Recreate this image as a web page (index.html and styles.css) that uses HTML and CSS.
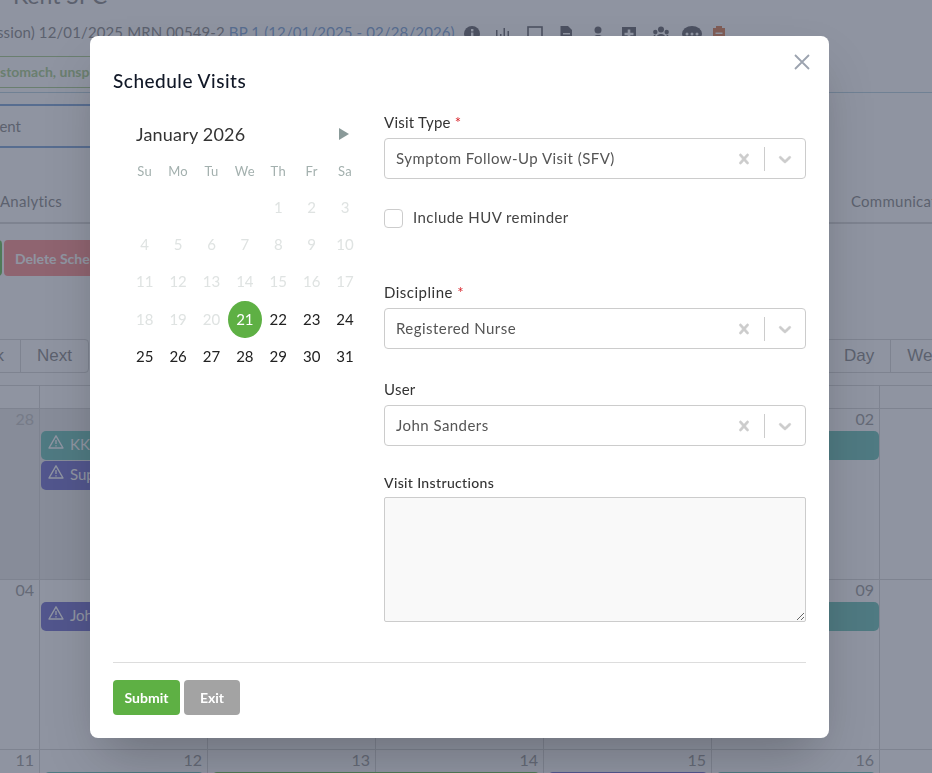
FILE: index.html
```html
<!DOCTYPE html>
<html lang="en">

<head>
  <meta charset="UTF-8">
  <meta name="viewport" content="width=device-width, initial-scale=1.0">
  <title>Schedule Visits</title>
  <link rel="stylesheet" href="styles.css">
</head>

<body>
  <svg class="sprites" width="0" height="0" aria-hidden="true">
    <symbol id="icon-warning" viewBox="0 0 16 16">
      <path d="M8 1.8 15 14H1z" fill="none" stroke="currentColor" stroke-width="1.4" stroke-linejoin="round" />
      <path d="M8 6v4M8 11.3v1.2" stroke="currentColor" stroke-width="1.4" />
    </symbol>
    <symbol id="icon-clear" viewBox="0 0 20 20">
      <path d="M14.348 14.849c-0.469 0.469-1.229 0.469-1.697 0l-2.651-3.030-2.651 3.029c-0.469 0.469-1.229 0.469-1.697 0-0.469-0.469-0.469-1.229 0-1.697l2.758-3.15-2.759-3.152c-0.469-0.469-0.469-1.228 0-1.697s1.228-0.469 1.697 0l2.652 3.031 2.651-3.031c0.469-0.469 1.228-0.469 1.697 0s0.469 1.229 0 1.697l-2.758 3.152 2.758 3.15c0.469 0.469 0.469 1.229 0 1.698z" />
    </symbol>
    <symbol id="icon-chevron" viewBox="0 0 20 20">
      <path d="M4.516 7.548c0.436-0.446 1.043-0.481 1.576 0l3.908 3.747 3.908-3.747c0.533-0.481 1.141-0.446 1.574 0 0.436 0.445 0.408 1.197 0 1.615-0.406 0.418-4.695 4.502-4.695 4.502-0.217 0.223-0.502 0.335-0.787 0.335s-0.57-0.112-0.789-0.335c0 0-4.287-4.084-4.695-4.502s-0.436-1.17 0-1.615z" />
    </symbol>
  </svg>

  <div class="page">
    <h1 class="patient-name">Kent SFC</h1>

    <div class="patient-info">
      <span>(Admission) 12/01/2025 MRN 00549-2</span>
      <span class="patient-info_period">BP 1 (12/01/2025 - 02/28/2026)</span>
      <div class="patient-icons">
        <svg viewBox="0 0 16 16"><circle cx="8" cy="8" r="8" /><rect x="7" y="3" width="2.4" height="2.4" fill="#fff" /><rect x="7" y="6.5" width="2.4" height="7" fill="#fff" /></svg>
        <svg viewBox="0 0 16 16"><path d="M1 4h1.5v12H1zM5 8h1.5v8H5zM8.500 2H10v14H8.500zM12.500 5H14v11h-1.500z" /></svg>
        <svg viewBox="0 0 16 16"><rect x="1" y="1" width="14" height="14" fill="none" stroke="currentColor" stroke-width="1.6" /></svg>
        <svg viewBox="0 0 16 16"><path d="M2.500 0H10l4 4v12H2.500zM5 7v1.500h7V7zM5 10v1.500h7V10z" fill-rule="evenodd" /></svg>
        <svg viewBox="0 0 16 16"><circle cx="8" cy="4" r="3.500" /><path d="M2 16c0-5 2-7 6-7s6 2 6 7z" /></svg>
        <svg viewBox="0 0 16 16"><path d="M1 1h14v14H1zM6.700 3.500v3.200H3.500v2.600h3.200v3.200h2.600V9.300h3.200V6.700H9.300V3.500z" fill-rule="evenodd" /></svg>
        <svg viewBox="0 0 16 16"><circle cx="8" cy="3.500" r="3" /><circle cx="2.300" cy="6" r="2.200" /><circle cx="13.700" cy="6" r="2.200" /><path d="M3 14c0-4 2-6 5-6s5 2 5 6zM0 12c0-2 1-3.500 2.500-3.500L2 12zM16 12c0-2-1-3.500-2.500-3.500L14 12z" /></svg>
        <svg class="patient-icons_chat" viewBox="0 0 20 16"><ellipse cx="10" cy="8" rx="10" ry="8" /><g fill="#fff"><circle cx="5" cy="8" r="1.500" /><circle cx="10" cy="8" r="1.500" /><circle cx="15" cy="8" r="1.500" /></g></svg>
        <svg class="patient-icons_clipboard" viewBox="0 0 16 16"><path d="M5 2V0h6v2h3v14H2V2zM4.500 6.500V8h7V6.500zM4.500 10v1.500h7V10z" fill-rule="evenodd" /></svg>
      </div>
    </div>

    <div class="diagnosis">stomach, unspecified</div>
    <div class="rule"></div>
    <div class="assessment">Assessment</div>

    <nav class="tabs">
      <a>Analytics</a>
      <a>Communication</a>
    </nav>

    <div class="actions">
      <button class="actions_sliver"></button>
      <button class="actions_delete">Delete Schedule</button>
    </div>

    <div class="cal-toolbar">
      <div class="cal-toolbar_group cal-toolbar_group--left">
        <button>Back</button>
        <button>Next</button>
      </div>
      <div class="cal-toolbar_group cal-toolbar_group--right">
        <button>Day</button>
        <button>Week</button>
      </div>
    </div>

    <div class="cal">
      <div class="cal_head">
        <div></div><div></div><div></div><div></div><div></div><div></div><div></div>
      </div>

      <div class="cal_week cal_week--first">
        <div class="cal_bg cal_bg--past"></div>
        <div class="cal_bg cal_bg--past"></div>
        <div class="cal_bg"></div>
        <div class="cal_bg"></div>
        <div class="cal_bg"></div>
        <div class="cal_bg"></div>
        <div class="cal_bg cal_bg--last"></div>
        <span class="cal_date cal_date--c1">28</span>
        <span class="cal_date cal_date--c6">02</span>
        <div class="event event--teal event--full"><svg><use href="#icon-warning" /></svg>KKa</div>
        <div class="event event--purple event--left"><svg><use href="#icon-warning" /></svg>Sup</div>
      </div>

      <div class="cal_week">
        <div class="cal_bg"></div>
        <div class="cal_bg"></div>
        <div class="cal_bg"></div>
        <div class="cal_bg"></div>
        <div class="cal_bg"></div>
        <div class="cal_bg"></div>
        <div class="cal_bg cal_bg--last"></div>
        <span class="cal_date cal_date--c1">04</span>
        <span class="cal_date cal_date--c6">09</span>
        <div class="event event--purple event--left"><svg><use href="#icon-warning" /></svg>Joh</div>
        <div class="event event--teal event--right"></div>
      </div>

      <div class="cal_week">
        <div class="cal_bg"></div>
        <div class="cal_bg"></div>
        <div class="cal_bg"></div>
        <div class="cal_bg"></div>
        <div class="cal_bg"></div>
        <div class="cal_bg"></div>
        <div class="cal_bg cal_bg--last"></div>
        <span class="cal_date cal_date--c1">11</span>
        <span class="cal_date cal_date--c2">12</span>
        <span class="cal_date cal_date--c3">13</span>
        <span class="cal_date cal_date--c4">14</span>
        <span class="cal_date cal_date--c5">15</span>
        <span class="cal_date cal_date--c6">16</span>
        <div class="event event--teal event--day2"></div>
        <div class="event event--green event--day3"></div>
        <div class="event event--purple event--day5"></div>
        <div class="event event--teal event--day6"></div>
      </div>
    </div>
  </div>

  <div class="overlay">
    <div class="modal">
      <button class="modal_close" aria-label="Close">
        <svg viewBox="0 0 16 16" width="16" height="16"><path d="M1 1l14 14M15 1 1 15" /></svg>
      </button>
      <h2 class="modal_title">Schedule Visits</h2>

      <div class="modal_body">
        <div class="picker">
          <div class="picker_head">
            <span>January 2026</span>
            <span class="picker_next"></span>
          </div>
          <div class="picker_grid">
            <span class="picker_dow">Su</span><span class="picker_dow">Mo</span><span class="picker_dow">Tu</span><span class="picker_dow">We</span><span class="picker_dow">Th</span><span class="picker_dow">Fr</span><span class="picker_dow">Sa</span>
            <span></span><span></span><span></span><span></span><span class="off">1</span><span class="off">2</span><span class="off">3</span>
            <span class="off">4</span><span class="off">5</span><span class="off">6</span><span class="off">7</span><span class="off">8</span><span class="off">9</span><span class="off">10</span>
            <span class="off">11</span><span class="off">12</span><span class="off">13</span><span class="off">14</span><span class="off">15</span><span class="off">16</span><span class="off">17</span>
            <span class="off">18</span><span class="off">19</span><span class="off">20</span><span class="selected">21</span><span>22</span><span>23</span><span>24</span>
            <span>25</span><span>26</span><span>27</span><span>28</span><span>29</span><span>30</span><span>31</span>
          </div>
        </div>

        <form class="form">
          <label class="form_label">Visit Type <em>*</em></label>
          <div class="select">
            <span class="select_value">Symptom Follow-Up Visit (SFV)</span>
            <svg class="select_icon"><use href="#icon-clear" /></svg>
            <span class="select_sep"></span>
            <svg class="select_icon"><use href="#icon-chevron" /></svg>
          </div>

          <label class="form_check">
            <input type="checkbox">
            <span>Include HUV reminder</span>
          </label>

          <label class="form_label form_label--discipline">Discipline <em>*</em></label>
          <div class="select">
            <span class="select_value">Registered Nurse</span>
            <svg class="select_icon"><use href="#icon-clear" /></svg>
            <span class="select_sep"></span>
            <svg class="select_icon"><use href="#icon-chevron" /></svg>
          </div>

          <label class="form_label form_label--user">User</label>
          <div class="select">
            <span class="select_value">John Sanders</span>
            <svg class="select_icon"><use href="#icon-clear" /></svg>
            <span class="select_sep"></span>
            <svg class="select_icon"><use href="#icon-chevron" /></svg>
          </div>

          <label class="form_label form_label--notes">Visit Instructions</label>
          <textarea class="form_notes"></textarea>
        </form>
      </div>

      <div class="modal_footer">
        <button class="btn btn--submit">Submit</button>
        <button class="btn btn--exit">Exit</button>
      </div>
    </div>
  </div>
</body>

</html>
```

FILE: styles.css
```css
* {
  box-sizing: border-box;
  padding: 0;
  margin: 0;
}

html,
body {
  height: 773px;
  overflow: hidden;
}

body {
  font-family: Lato, sans-serif;
  font-size: 15px;
  color: #999;
  background-color: #fff;
}

button {
  font-family: inherit;
  border: none;
  background: none;
}

.sprites {
  display: block;
}

/* page behind the dialog */

.page {
  width: 932px;
  height: 773px;
  overflow: hidden;
}

.patient-name {
  height: 26px;
  margin-top: -18px;
  padding-left: 13px;
  font-size: 23px;
  font-weight: 400;
  line-height: 26px;
}

.patient-info {
  display: flex;
  align-items: center;
  gap: 4px;
  height: 16px;
  margin-top: 16px;
  margin-left: -42px;
  letter-spacing: .12px;
  white-space: nowrap;
}

.patient-info_period {
  color: #8fb0dc;
}

.patient-icons {
  display: flex;
  align-items: center;
  gap: 15.5px;
  margin-top: 4px;
  margin-left: 5px;
  color: #7a7a80;
}

.patient-icons svg {
  display: block;
  width: 16px;
  height: 16px;
  fill: currentColor;
}

.patient-icons_chat {
  width: 20px !important;
  margin-left: -2px;
}

.patient-icons_clipboard {
  margin-left: -7px;
  color: #e0916a;
}

.diagnosis {
  width: 400px;
  height: 32px;
  margin-top: 16px;
  margin-left: -12px;
  padding-left: 12px;
  border-top: 1px solid #b5d49a;
  border-bottom: 1px solid #b5d49a;
  font-size: 14px;
  font-weight: 700;
  line-height: 30px;
  color: #b5d49a;
  white-space: nowrap;
}

.rule {
  height: 1px;
  margin-top: 4px;
  background-color: #c0d8e4;
}

.assessment {
  width: 400px;
  height: 44px;
  margin-top: 11px;
  margin-left: -57px;
  border-top: 2px solid #8fb0dc;
  border-bottom: 2px solid #8fb0dc;
  line-height: 40px;
}

.tabs {
  display: flex;
  justify-content: space-between;
  height: 76px;
  padding-top: 42px;
  margin-right: -26px;
  border-bottom: 2px solid #ddd;
  line-height: 22px;
  letter-spacing: .25px;
  white-space: nowrap;
}

.actions {
  display: flex;
  gap: 2px;
  height: 36px;
  margin-top: 16px;
}

.actions button {
  height: 36px;
  border-radius: 4px;
  font-size: 14px;
  font-weight: 700;
}

.actions_sliver {
  width: 12px;
  margin-left: -10px;
  background-color: #7fcb6a;
}

.actions_delete {
  width: 200px;
  padding-left: 11px;
  text-align: left;
  color: #fff;
  background-color: #ff9f9d;
}

.cal-toolbar {
  display: flex;
  height: 34px;
  margin-top: 63px;
}

.cal-toolbar_group {
  display: flex;
}

.cal-toolbar_group--left {
  justify-content: flex-end;
  width: 89px;
  margin-left: 0;
}

.cal-toolbar_group--right {
  margin-left: 738px;
}

.cal-toolbar button {
  height: 34px;
  padding: 0 16px;
  border: 1px solid #ddd;
  font-family: "Liberation Sans", sans-serif;
  font-size: 17px;
  color: #999;
  white-space: nowrap;
}

.cal-toolbar_group--left button:first-child {
  margin-left: -40px;
}

.cal-toolbar_group--left button:last-child {
  margin-left: -1px;
  border-radius: 0 4px 4px 0;
}

.cal-toolbar_group--right button:last-child {
  margin-left: -1px;
}

.cal {
  margin-top: 12px;
  border-top: 1px solid #ddd;
}

.cal_head,
.cal_week {
  display: grid;
  grid-template-columns: 40px repeat(5, 168px) 52px;
}

.cal_head {
  height: 23px;
  border-bottom: 1px solid #ddd;
}

.cal_head div {
  border-right: 1px solid #ddd;
}

.cal_head div:last-child {
  border-right: none;
}

.cal_week {
  grid-template-rows: 22px 30px 30px 1fr;
  height: 170px;
  border-bottom: 1px solid #ddd;
}

.cal_week--first {
  height: 171px;
}

.cal_bg {
  grid-row: 1 / -1;
  border-right: 1px solid #ddd;
}

.cal_bg:nth-child(1) { grid-column: 1; }
.cal_bg:nth-child(2) { grid-column: 2; }
.cal_bg:nth-child(3) { grid-column: 3; }
.cal_bg:nth-child(4) { grid-column: 4; }
.cal_bg:nth-child(5) { grid-column: 5; }
.cal_bg:nth-child(6) { grid-column: 6; }
.cal_bg:nth-child(7) { grid-column: 7; }

.cal_bg--past {
  background-color: #eee;
}

.cal_bg--last {
  border-right: none;
}

.cal_date {
  grid-row: 1;
  z-index: 1;
  padding-right: 6px;
  font-size: 16px;
  line-height: 20px;
  text-align: right;
  color: #aaa;
}

.cal_week--first .cal_date--c1 {
  color: #ccc;
}

.cal_date--c1 { grid-column: 1; }
.cal_date--c2 { grid-column: 2; }
.cal_date--c3 { grid-column: 3; }
.cal_date--c4 { grid-column: 4; }
.cal_date--c5 { grid-column: 5; }
.cal_date--c6 { grid-column: 6; }

.event {
  display: flex;
  align-items: flex-start;
  gap: 6px;
  z-index: 1;
  height: 29px;
  margin: 0 1px;
  padding: 3px 7px;
  border-radius: 5px;
  font-size: 15px;
  line-height: 20px;
  color: #fff;
  overflow: hidden;
}

.event svg {
  flex: none;
  width: 16px;
  height: 16px;
}

.event--teal {
  background-color: #7fcbc0;
}

.event--purple {
  background-color: #8583d6;
}

.event--green {
  background-color: #7fcb6a;
}

.event--full {
  grid-column: 2 / 7;
  grid-row: 2;
}

.event--left {
  grid-column: 2 / 5;
  grid-row: 2;
}

.event--full + .event--left {
  grid-row: 3;
}

.event--right {
  grid-column: 5 / 7;
  grid-row: 2;
}

.event--day2 {
  grid-column: 2;
  grid-row: 2;
  margin: 0 4px;
}

.event--day3 {
  grid-column: 3 / 5;
  grid-row: 2;
  margin: 0 4px;
}

.event--day5 {
  grid-column: 5;
  grid-row: 2;
  margin: 0 4px;
}

.event--day6 {
  grid-column: 6;
  grid-row: 2;
  margin: 0 4px;
}

/* dialog */

.overlay {
  position: fixed;
  inset: 0;
  z-index: 10;
  padding: 36px 0 0 90px;
  background-color: rgba(31, 41, 67, .5);
}

.modal {
  position: relative;
  width: 739px;
  padding: 33px 23px 23px;
  border-radius: 8px;
  color: #333;
  background-color: #fff;
  box-shadow: 0 25px 50px -12px rgba(0, 0, 0, .25);
}

.modal_close {
  position: absolute;
  top: 18px;
  right: 19px;
  width: 16px;
  height: 16px;
}

.modal_close svg {
  display: block;
  fill: none;
  stroke: #9ca3af;
  stroke-width: 1.8;
}

.modal_title {
  height: 24px;
  margin-bottom: 20px;
  font-size: 19px;
  font-weight: 500;
  line-height: 24px;
  letter-spacing: .5px;
  color: #111827;
}

.modal_body {
  display: grid;
  grid-template-columns: 271px 422px;
  padding-bottom: 40px;
  border-bottom: 1px solid #ddd;
}

.picker {
  padding: 1px 0 0 15px;
}

.picker_head {
  display: flex;
  align-items: center;
  justify-content: space-between;
  width: 234px;
  height: 40px;
  padding: 0 13px 0 8px;
  font-size: 18px;
  font-weight: 400;
  letter-spacing: .2px;
  color: #333;
}

.picker_next {
  width: 0;
  height: 0;
  border-top: 6.500px solid transparent;
  border-bottom: 6.500px solid transparent;
  border-left: 10px solid #8a9a99;
}

.picker_grid {
  display: grid;
  grid-template-columns: repeat(7, 33.400px);
  grid-template-rows: 35px;
  grid-auto-rows: 37.300px;
  font-size: 15px;
  color: #222;
}

.picker_grid span {
  display: flex;
  align-items: center;
  justify-content: center;
  padding-bottom: 2px;
}

.picker_grid .picker_dow {
  font-size: 13px;
  letter-spacing: .3px;
  color: #a3b0ae;
}

.picker_grid .off {
  color: #dfe3e2;
}

.picker_grid .selected {
  border-radius: 50%;
  color: #fff;
  background-color: #5eb044;
}

.form_label {
  display: block;
  height: 18px;
  margin-bottom: 7px;
  font-size: 15px;
  line-height: 18px;
  letter-spacing: .25px;
  color: #333;
}

.form_label em {
  font-style: normal;
  color: #d8232a;
}

.form_label--discipline {
  margin-top: 55px;
  letter-spacing: .5px;
}

.form_label--user {
  margin-top: 31px;
}

.form_label--notes {
  margin-top: 28px;
  margin-bottom: 5px;
  font-size: 14px;
  font-weight: 500;
  letter-spacing: .35px;
}

.select {
  display: flex;
  align-items: center;
  height: 41px;
  padding: 0 10px 0 11px;
  border: 1px solid #ccc;
  border-radius: 4px;
}

.select_value {
  flex: 1;
  padding-bottom: 2px;
  font-size: 15px;
  letter-spacing: .45px;
  color: #555;
}

.select_icon {
  width: 20px;
  height: 20px;
  fill: #ccc;
  stroke: #ccc;
  stroke-width: .5;
}

.select_sep {
  width: 1px;
  height: 24px;
  margin: 0 10px;
  background-color: #ccc;
}

.form_check {
  display: flex;
  align-items: center;
  gap: 10px;
  height: 19px;
  margin-top: 30px;
  font-size: 15px;
  letter-spacing: .45px;
  color: #444;
}

.form_check span {
  padding-bottom: 3px;
}

.form_check input {
  appearance: none;
  width: 19px;
  height: 19px;
  border: 1px solid #ccc;
  border-radius: 4px;
  background-color: #fff;
}

.form_notes {
  display: block;
  width: 100%;
  height: 125px;
  border: 1px solid #ccc;
  border-radius: 2px;
  background-color: #f9f9f9;
}

.modal_footer {
  display: flex;
  gap: 4px;
  margin-top: 17px;
}

.btn {
  height: 35px;
  border-radius: 4px;
  font-size: 14px;
  font-weight: 700;
  color: #fff;
}

.btn--submit {
  width: 67px;
  background-color: #5eb044;
}

.btn--exit {
  width: 56px;
  background-color: #a3a3a3;
}
```
